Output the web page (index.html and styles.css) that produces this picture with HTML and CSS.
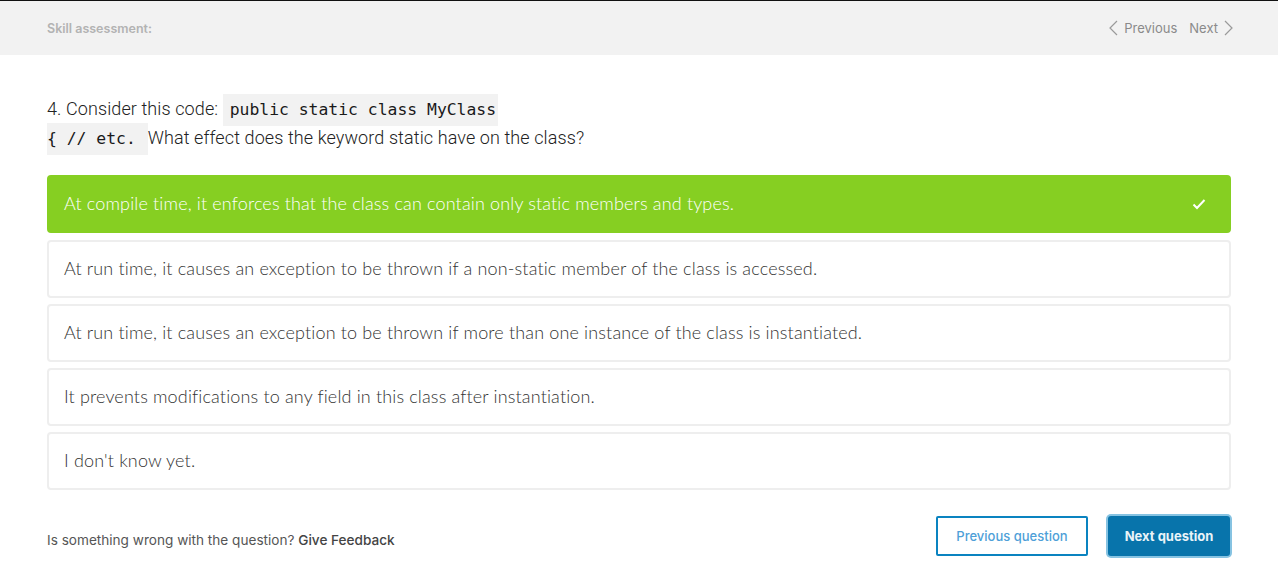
FILE: index.html
```html
<!DOCTYPE html>
<html>
<head>
<meta charset="utf-8">
<link rel="stylesheet" href="styles.css">
</head>
<body>
<div class="frame">
  <header class="topbar">
    <span class="title">Skill assessment:</span>
    <nav class="pager">
      <span class="pager-item"><svg class="chev" width="9" height="16" viewBox="0 0 9 16"><path d="M8 1 L1 8 L8 15" fill="none" stroke="#9a9a9a" stroke-width="1.2"/></svg>Previous</span>
      <span class="pager-item">Next<svg class="chev" width="9" height="16" viewBox="0 0 9 16"><path d="M1 1 L8 8 L1 15" fill="none" stroke="#9a9a9a" stroke-width="1.2"/></svg></span>
    </nav>
  </header>
  <main class="content">
    <p class="question">4. Consider this code: <code class="c1">public static class MyClass</code><br><code class="c2">{ // etc. </code> What effect does the keyword static have on the class?</p>
    <ul class="options">
      <li class="option correct"><span>At compile time, it enforces that the class can contain only static members and types.</span>
        <svg width="14" height="12" viewBox="0 0 14 12"><path d="M1.5 6.5 L5 10 L12.5 2" fill="none" stroke="#fff" stroke-width="2"/></svg></li>
      <li class="option"><span>At run time, it causes an exception to be thrown if a non-static member of the class is accessed.</span></li>
      <li class="option"><span>At run time, it causes an exception to be thrown if more than one instance of the class is instantiated.</span></li>
      <li class="option"><span>It prevents modifications to any field in this class after instantiation.</span></li>
      <li class="option"><span>I don't know yet.</span></li>
    </ul>
    <div class="footer">
      <p class="feedback">Is something wrong with the question? <span class="fb-link">Give Feedback</span></p>
      <div class="buttons">
        <button class="btn btn-outline">Previous question</button>
        <button class="btn btn-primary">Next question</button>
      </div>
    </div>
  </main>
</div>
</body>
</html>
```
FILE: styles.css
```css
* { box-sizing: border-box; }
html, body { margin: 0; padding: 0; background: #fff; }
body { font-family: "Open Sans", "Liberation Sans", sans-serif; }
.frame {
  width: 1278px;
  height: 575px;
  border-top: 1px solid #111;
  overflow: hidden;
}
.topbar {
  height: 54px;
  background: #f2f2f2;
  display: flex;
  align-items: center;
  justify-content: space-between;
  padding: 0 45px 0 47px;
}
.title {
  font-family: "Inter", "Liberation Sans", sans-serif;
  font-size: 12.5px;
  font-weight: 600;
  color: #b3b3b3;
}
.pager {
  display: flex;
  gap: 12px;
  font-family: "Inter", "Liberation Sans", sans-serif;
  font-size: 13px;
  color: #8a8a8a;
}
.pager-item { display: flex; align-items: center; gap: 6px; }
.chev { display: block; }
.content { padding: 39px 47px 0 47px; }
.question {
  margin: 0;
  font-family: "Roboto", sans-serif;
  font-size: 18px;
  font-weight: 300;
  letter-spacing: 0.1px;
  line-height: 29px;
  color: #222;
}
.question code {
  font-family: "DejaVu Sans Mono", monospace;
  font-size: 16.4px;
  line-height: 16px;
  letter-spacing: 0;
  background: #f2f2f2;
  padding: 6px 2px 7px 0;
  color: #1a1a1a;
}
.question code.c1 { padding-left: 7px; }
.options {
  list-style: none;
  margin: 23px 0 0 0;
  padding: 0;
  display: flex;
  flex-direction: column;
  gap: 6px;
}
.option {
  height: 58px;
  border: 2px solid #eeeeee;
  border-radius: 4px;
  display: flex;
  align-items: center;
  justify-content: space-between;
  padding: 0 23px 0 15px;
  font-family: "Lato", sans-serif;
  font-size: 18px;
  font-weight: 300;
  letter-spacing: 0.15px;
  color: #333;
}
.option span { position: relative; top: -1px; }
.option.correct {
  background: #86cf22;
  border-color: #86cf22;
  color: #fff;
  margin-bottom: 1px;
}
.footer {
  display: flex;
  justify-content: space-between;
  align-items: center;
  margin-top: 24px;
}
.feedback {
  margin: 10px 0 0 0;
  font-family: "Inter", "Liberation Sans", sans-serif;
  font-size: 13.6px;
  color: #555;
}
.fb-link { font-weight: 500; color: #444; }
.buttons { display: flex; gap: 20px; align-items: center; margin-right: -1px; }
.btn {
  font-family: "Inter", "Liberation Sans", sans-serif;
  font-size: 13px;
  font-weight: 500;
  height: 40px;
  border-radius: 2px;
  cursor: pointer;
}
.btn-outline {
  width: 152px;
  background: #fff;
  border: 2px solid #0a83c0;
  color: #4e9fd8;
  margin-top: 2px;
}
.btn-primary {
  width: 122px;
  background: #0874ab;
  border: none;
  color: #eaf3f8;
  font-weight: 700;
  box-shadow: 0 0 0 2px #86c3e2;
  border-radius: 3px;
  margin-right: 2px;
  margin-top: 2px;
}
```
